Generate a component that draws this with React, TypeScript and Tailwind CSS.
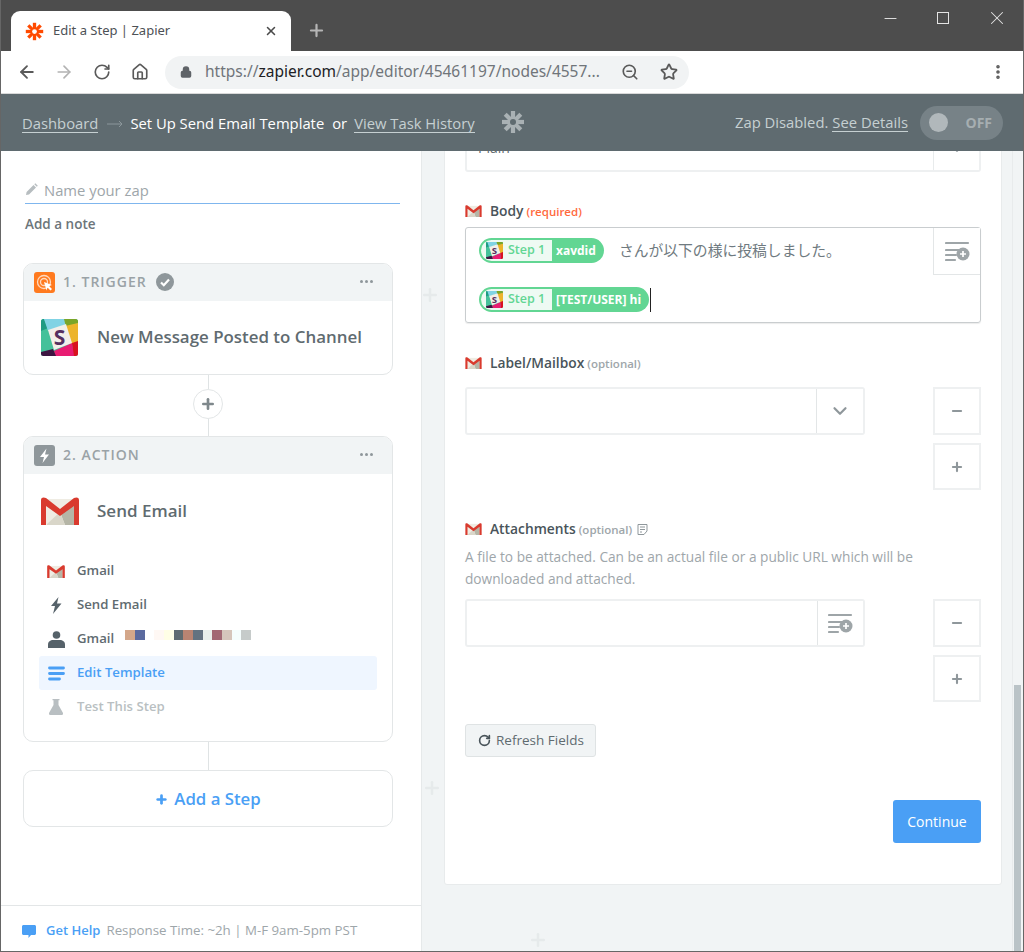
import { ArrowLeft, ArrowRight, ChevronDown, Home, Lock, Minus, MoreVertical, Plus, RotateCw, Star, X, ZoomOut } from 'lucide-react'

const redacted = [
  'bg-[#d4a78a]', 'bg-[#5b6a9f]', 'bg-white', 'bg-[#fff8f4]', 'bg-[#fffee6]', 'bg-[#5f6b70]',
  'bg-[#b98472]', 'bg-[#637280]', 'bg-[#e8efeb]', 'bg-[#a26873]', 'bg-[#d5c5bb]', 'bg-[#f5fdfd]', 'bg-[#c6cbca]',
]

function ZapierMark({ size, color, hole }: { size: number; color: string; hole: string }) {
  return (
    <svg width={size} height={size} viewBox="0 0 24 24" className="shrink-0">
      <g stroke={color} strokeWidth="4.2">
        <line x1="12" y1="1" x2="12" y2="23" />
        <line x1="1" y1="12" x2="23" y2="12" />
        <line x1="4.2" y1="4.2" x2="19.8" y2="19.8" />
        <line x1="19.8" y1="4.2" x2="4.2" y2="19.8" />
      </g>
      <circle cx="12" cy="12" r="3" fill={hole} />
    </svg>
  )
}

function GmailIcon({ w, h }: { w: number; h: number }) {
  return (
    <svg width={w} height={h} viewBox="0 0 38 28" className="shrink-0">
      <path d="M3 2h32v26H3z" fill="#efece3" />
      <path d="M19 15L33 5v23h-9z" fill="#b5b5a6" />
      <path d="M6 27l13-12 5 13H6z" fill="#d9d6c9" />
      <path d="M0 3c0-3 3-3 5-2l14 11L33 1c2-1 5-1 5 2v25h-5V9L19 19 5 9v19H0z" fill="#d93a2e" />
    </svg>
  )
}

function SlackIcon({ size, id }: { size: number; id: string }) {
  return (
    <svg width={size} height={size} viewBox="0 0 37 37" className="shrink-0">
      <clipPath id={id}>
        <rect width="37" height="37" rx="2.5" />
      </clipPath>
      <g clipPath={`url(#${id})`}>
        <rect width="37" height="37" fill="#44c19a" />
        <path d="M0 0h3l4 9-7 3z" fill="#1d9b83" />
        <path d="M3 0h22l1 5-19 7z" fill="#80d3e4" />
        <path d="M23 0h14v4L25 8z" fill="#7aa52a" />
        <path d="M24 7l13-3v19l-7 3z" fill="#ecb42c" />
        <path d="M31 24l6-2v15h-5z" fill="#d9121f" />
        <path d="M13 32l18-8 2 13H14z" fill="#e81c72" />
        <path d="M0 33l12-3 3 7H0z" fill="#3d1441" />
        <path d="M7 11l18-6 6 19-18 7z" fill="#f2efe9" />
        <text x="18.5" y="26" textAnchor="middle" fontSize="21" fontWeight="700" fill="#55305f" fontFamily="Open Sans, sans-serif">S</text>
      </g>
    </svg>
  )
}

function FieldAddIcon() {
  return (
    <svg width="25" height="21" viewBox="0 0 25 21">
      <path d="M1 2h22M1 9h13M1 14h10M1 19h9" stroke="#9ea5a8" strokeWidth="2.2" strokeLinecap="round" />
      <circle cx="18" cy="13" r="6.5" fill="#9ea5a8" />
      <path d="M18 10v6M15 13h6" stroke="white" strokeWidth="1.7" />
    </svg>
  )
}

function BoxButton({ className, children }: { className: string; children: React.ReactNode }) {
  return <div className={`flex items-center justify-center bg-white ${className}`}>{children}</div>
}

function AddRemove() {
  return (
    <div className="flex flex-col gap-2 w-12">
      <BoxButton className="h-12 border-2 border-[#eef0f1]"><Minus size={14} strokeWidth={3.6} className="text-[#8f979b]" /></BoxButton>
      <BoxButton className="h-[47px] border-2 border-[#eef0f1]"><Plus size={14} strokeWidth={3.6} className="text-[#8f979b]" /></BoxButton>
    </div>
  )
}

function FieldLabel({ name, hint, color, children }: { name: string; hint: string; color: string; children?: React.ReactNode }) {
  return (
    <div className="flex items-center h-5">
      <GmailIcon w={17} h={12} />
      <span className="ml-2 text-[13.8px] font-semibold text-[#49545a] leading-5">{name}</span>
      <span className={`ml-[3px] text-[11.5px] font-semibold leading-5 mt-px ${color}`}>{hint}</span>
      {children}
    </div>
  )
}

function Pill({ id, text }: { id: string; text: string }) {
  return (
    <span className="inline-flex items-center h-[25px] rounded-full bg-[#62d693] pl-[2px] pr-[8px] text-[12px] font-bold text-white whitespace-nowrap">
      <span className="flex items-center h-[21px] rounded-l-full bg-[#eefaf3] pl-[5px] pr-[6px] mr-[4px]">
        <SlackIcon size={17} id={id} />
        <span className="ml-[5px] text-[12.5px] text-[#62d693] font-semibold w-[38px]">Step 1</span>
      </span>
      {text}
    </span>
  )
}

function StepHeader({ icon, title, check }: { icon: React.ReactNode; title: string; check?: boolean }) {
  return (
    <div className="flex items-center h-[37px] bg-[#f1f4f5] rounded-t-[9px] pl-[10px] pr-[19px]">
      {icon}
      <span className="ml-[8px] mb-[2px] text-[14px] font-semibold tracking-[1px] text-[#9aa2a6]">{title}</span>
      {check && (
        <svg width="18" height="18" viewBox="0 0 18 18" className="ml-[9px] mb-[2px]">
          <circle cx="9" cy="9" r="9" fill="#8f979b" />
          <path d="M5 9.5l2.8 2.7L13 6.5" fill="none" stroke="white" strokeWidth="2.2" />
        </svg>
      )}
      <span className="ml-auto mb-[2px] flex gap-[2px]">
        <i className="size-[3px] rounded-full bg-[#8f979b]" />
        <i className="size-[3px] rounded-full bg-[#8f979b]" />
        <i className="size-[3px] rounded-full bg-[#8f979b]" />
      </span>
    </div>
  )
}

function MenuRow({ icon, label, className, children }: { icon: React.ReactNode; label: string; className: string; children?: React.ReactNode }) {
  return (
    <div className={`flex items-center h-[34px] rounded-[3px] text-[13.2px] font-semibold ${className}`}>
      <span className="w-[34px] mr-[4px] flex justify-center shrink-0">{icon}</span>
      {label}
      {children}
    </div>
  )
}

function BgPlus({ className }: { className: string }) {
  return <Plus size={20} strokeWidth={3} className={`absolute text-[#e6eaeb] ${className}`} />
}

export default function App() {
  return (
    <div className="w-[1024px] h-[952px] flex flex-col overflow-hidden border-x border-b border-[#666] font-['Open_Sans',sans-serif] bg-white">
      {/* window title + tabs */}
      <div className="h-[51px] bg-[#4d4d4d] flex items-end pl-[10px] shrink-0">
        <div className="w-[280px] h-10 bg-white rounded-t-[9px] flex items-center pl-[14px] pr-[13px]">
          <ZapierMark size={19} color="#ff4a00" hole="white" />
          <span className="ml-[9px] text-[13px] text-[#4d5156] font-['Noto_Sans',sans-serif]">Edit a Step | Zapier</span>
          <X size={14} strokeWidth={2.6} className="ml-auto text-[#4a4a4a]" />
        </div>
        <Plus size={19} strokeWidth={2.8} className="ml-[16px] mb-[11px] text-[#b5b5b5]" />
        <div className="ml-auto self-start flex items-center h-9 pr-[15px] text-[#e4e4e4]">
          <Minus size={19} strokeWidth={1.2} />
          <span className="size-[12px] border border-[#e4e4e4] ml-[37px]" />
          <X size={22} strokeWidth={1.1} className="ml-[37px]" />
        </div>
      </div>

      {/* browser toolbar */}
      <div className="h-[43px] bg-white border-b border-[#d9d9d9] flex items-center pl-[16px] pr-[16px] shrink-0">
        <ArrowLeft size={20} strokeWidth={2.2} className="text-[#5a5a5a]" />
        <ArrowRight size={20} strokeWidth={2} className="ml-[17px] text-[#b3b3b3]" />
        <RotateCw size={18} strokeWidth={2.2} className="ml-[19px] text-[#5a5a5a]" />
        <Home size={18} strokeWidth={2.2} className="ml-[20px] text-[#5a5a5a]" />
        <div className="ml-[16px] w-[524px] h-[33px] rounded-full bg-[#f1f3f4] flex items-center pl-[15px] pr-[11px]">
          <Lock size={12} strokeWidth={3} fill="currentColor" className="text-[#5f6368]" />
          <span className="ml-[13px] text-[15.5px] text-[#70757a] font-['Noto_Sans',sans-serif] whitespace-nowrap">
            https://<span className="text-[#202124]">zapier.com</span>/app/editor/45461197/nodes/4557...
          </span>
          <ZoomOut size={18} strokeWidth={2.2} className="ml-auto text-[#5a5a5a]" />
          <Star size={18} strokeWidth={2.4} className="ml-[21px] text-[#5a5a5a]" />
        </div>
        <MoreVertical size={18} strokeWidth={2.8} className="ml-auto text-[#5a5a5a]" />
      </div>

      {/* zap header */}
      <div className="h-[57px] bg-[#5f6b70] flex items-center pl-[21px] pr-[20px] text-[14.8px] shrink-0">
        <span className="text-[#c6d0d2] border-b border-[#c6d0d2] leading-[17px] mt-[2px]">Dashboard</span>
        <svg width="16" height="8" viewBox="0 0 16 8" className="ml-[9px] mt-[3px] shrink-0">
          <path d="M0 4h15M12 1l3 3-3 3" fill="none" stroke="#8c979b" strokeWidth="1" />
        </svg>
        <span className="ml-[7px] mt-[2px] text-white">Set Up Send Email Template</span>
        <span className="ml-2 mt-[2px] text-white">or</span>
        <span className="ml-[7px] mt-[2px] text-[#c6d0d2] border-b border-[#c6d0d2] leading-[17px]">View Task History</span>
        <span className="ml-[26px] mt-[-2px]"><ZapierMark size={24} color="#a9b1b4" hole="#5f6b70" /></span>
        <span className="ml-auto text-[#c6d0d2]">Zap Disabled.</span>
        <span className="ml-1 text-[#c6d0d2] border-b border-[#c6d0d2] leading-[17px]">See Details</span>
        <div className="ml-[12px] w-[83px] h-[34px] rounded-full bg-[#778287] flex items-center pl-[9px] pr-[11px]">
          <span className="size-[19px] rounded-full bg-[#b1b8bb]" />
          <span className="ml-auto text-[14px] font-bold text-[#a6aeb1]">OFF</span>
        </div>
      </div>

      <div className="flex flex-1 min-h-0">
        {/* left column */}
        <div className="w-[421px] shrink-0 flex flex-col border-r border-[#e6e9ea]">
          <div className="flex-1 pl-[22px] pt-[26px]">
            <div className="ml-[2px] w-[375px] h-[26px] flex items-center">
              <svg width="13" height="13" viewBox="0 0 13 13" className="shrink-0 mb-[1px]">
                <path d="M1 12l.6-3L8.5 2l2.5 2.5L4 11.5zM9.3 1.2l1-1 2.5 2.5-1 1z" fill="#b7bdc0" />
              </svg>
              <span className="ml-[6px] mt-[1px] text-[14.8px] text-[#9ea6aa]">Name your zap</span>
            </div>
            <div className="ml-[2px] w-[375px] h-px bg-[#7fb6ee]" />
            <div className="ml-[2px] mt-[10px] text-[13.5px] font-semibold text-[#6c757a] leading-[20px]">Add a note</div>

            <div className="mt-[29px] w-[370px] h-[112px] border border-[#e3e6e7] rounded-[10px] bg-white">
              <StepHeader
                check
                title="1. TRIGGER"
                icon={
                  <svg width="21" height="21" viewBox="0 0 21 21">
                    <rect width="21" height="21" rx="3" fill="#ff7a1f" />
                    <circle cx="10" cy="10" r="6.5" fill="none" stroke="#ffd9bf" strokeWidth="1.3" />
                    <circle cx="10" cy="10" r="3.5" fill="none" stroke="#ffd9bf" strokeWidth="1.3" />
                    <path d="M10 10l8 3-3 1 3 3-1.5 1.5-3-3-1 3z" fill="white" />
                  </svg>
                }
              />
              <div className="flex items-center h-[72px] pl-[17px]">
                <SlackIcon size={37} id="slack-trigger" />
                <span className="ml-[19px] text-[16.9px] font-semibold text-[#5f6b70] whitespace-nowrap">New Message Posted to Channel</span>
              </div>
            </div>

            <div className="w-[370px] h-[61px] flex flex-col items-center">
              <div className="w-px h-[14px] bg-[#dfe3e4]" />
              <div className="size-[30px] rounded-full border border-[#e3e6e7] flex items-center justify-center">
                <Plus size={16} strokeWidth={4} className="text-[#7f888c]" />
              </div>
              <div className="w-px flex-1 bg-[#dfe3e4]" />
            </div>

            <div className="w-[370px] h-[306px] border border-[#e3e6e7] rounded-[10px] bg-white">
              <StepHeader
                title="2. ACTION"
                icon={
                  <svg width="21" height="21" viewBox="0 0 21 21">
                    <rect width="21" height="21" rx="3" fill="#8f979b" />
                    <path d="M12.5 3.5L6 12h4l-1.5 6L15 9.5h-4z" fill="white" />
                  </svg>
                }
              />
              <div className="flex items-center h-[74px] pl-[17px]">
                <GmailIcon w={38} h={28} />
                <span className="ml-[18px] text-[17px] font-semibold text-[#5f6b70]">Send Email</span>
              </div>
              <div className="mx-[15px] mt-[6px] text-[#5f6b70]">
                <MenuRow label="Gmail" className="" icon={<GmailIcon w={18} h={13} />} />
                <MenuRow
                  label="Send Email"
                  className=""
                  icon={
                    <svg width="12" height="17" viewBox="0 0 12 17">
                      <path d="M8.5 0L1 9h4l-2 8L11.5 6.5H7z" fill="#56626a" />
                    </svg>
                  }
                />
                <MenuRow
                  label="Gmail"
                  className=""
                  icon={
                    <svg width="17" height="17" viewBox="0 0 17 17">
                      <circle cx="8.5" cy="4" r="3.8" fill="#56626a" />
                      <path d="M0 17v-3.5C0 10.5 2.5 9 5 9h7c2.5 0 5 1.5 5 4.5V17z" fill="#56626a" />
                    </svg>
                  }
                >
                  <span className="ml-[11px] mb-[9px] flex h-[10px]">
                    {redacted.map((c, i) => (
                      <i key={i} className={`w-[9.7px] h-[10px] ${c}`} />
                    ))}
                  </span>
                </MenuRow>
                <MenuRow
                  label="Edit Template"
                  className="bg-[#eff6ff] text-[#4a9ff5]"
                  icon={
                    <svg width="17" height="15" viewBox="0 0 17 15">
                      <path d="M1.5 2h14M1.5 7.5h14M1.5 13h10" stroke="#4a9ff5" strokeWidth="2.8" strokeLinecap="round" />
                    </svg>
                  }
                />
                <MenuRow
                  label="Test This Step"
                  className="text-[#b9bfc2]"
                  icon={
                    <svg width="14" height="16" viewBox="0 0 14 16">
                      <path d="M3.5 0h7v1.2H9.5V6L14 14c.4 1-.2 2-1.3 2H1.3C.2 16-.4 15 0 14l4.5-8V1.2h-1z" fill="#b9bfc2" />
                    </svg>
                  }
                />
              </div>
            </div>

            <div className="w-[370px] flex justify-center">
              <div className="w-px h-[28px] bg-[#dfe3e4]" />
            </div>
            <div className="w-[370px] h-[57px] pt-[1px] border border-[#e3e6e7] rounded-[10px] flex items-center justify-center text-[#4a9ff5] text-[16.8px] font-semibold">
              <Plus size={13} strokeWidth={5} className="mr-[6px]" />
              Add a Step
            </div>
          </div>
          <div className="h-[46px] border-t border-[#e3e6e7] flex items-center pl-[21px] pt-[5px] shrink-0">
            <svg width="14" height="13" viewBox="0 0 14 13">
              <path d="M1.5 0h11C13.3 0 14 .7 14 1.5v7c0 .8-.7 1.5-1.5 1.5H9l-2.5 3V10h-5C.7 10 0 9.3 0 8.5v-7C0 .7.7 0 1.5 0z" fill="#4a9ff5" />
            </svg>
            <span className="ml-[10px] text-[13px] font-semibold text-[#4a9ff5]">Get Help</span>
            <span className="ml-[6px] text-[13.3px] text-[#9ea6aa] whitespace-nowrap">Response Time: ~2h | M-F 9am-5pm PST</span>
          </div>
        </div>

        {/* right column */}
        <div className="flex-1 relative bg-[#f1f4f5] overflow-hidden flex">
          <BgPlus className="left-[-2px] top-[134px]" />
          <BgPlus className="left-[0px] top-[627px]" />
          <BgPlus className="left-[106px] top-[779px]" />
          <div className="flex-1 pl-[22px] pr-[10px]">
            <div className="-mt-[28px] h-[762px] bg-white border border-[#e8ebec] rounded-[3px] pl-[20px] pr-[20px]">
              <div className="flex h-[48px] border-2 border-[#eef0f1] rounded-[3px]">
                <span className="flex-1 pl-[11px] pt-[11px] text-[14px] text-[#5f6b70]">Plain</span>
                <BoxButton className="w-[46px] border-l border-[#e8ebec]"><ChevronDown size={22} strokeWidth={2.4} className="text-[#8f979b]" /></BoxButton>
              </div>

              <div className="mt-[29px]">
                <FieldLabel name="Body" hint="(required)" color="text-[#ff6a3d]" />
              </div>
              <div className="mt-[6px] h-[96px] border border-[#c9cdcf] rounded-[3px] flex shadow-[0_1px_1px_rgba(0,0,0,0.08)]">
                <div className="flex-1 pl-[13px] pt-[10px]">
                  <div className="flex items-center h-[25px]">
                    <Pill id="slack-a" text="xavdid" />
                    <span className="ml-[15px] text-[14.8px] text-[#6f7a80] font-['Open_Sans','Noto_Sans_CJK_JP',sans-serif] whitespace-nowrap">さんが以下の様に投稿しました。</span>
                  </div>
                  <div className="flex items-center h-[25px] mt-[24px]">
                    <Pill id="slack-b" text="[TEST/USER] hi" />
                    <span className="w-px h-[24px] bg-[#222] ml-[1px]" />
                  </div>
                </div>
                <BoxButton className="w-[47px] h-[47px] border-l border-b border-[#e3e6e7]"><FieldAddIcon /></BoxButton>
              </div>

              <div className="mt-[30px]">
                <FieldLabel name="Label/Mailbox" hint="(optional)" color="text-[#9ea6aa]" />
              </div>
              <div className="mt-[14px] flex justify-between">
                <div className="flex w-[400px] h-12 border-2 border-[#eef0f1] rounded-[3px]">
                  <div className="flex-1" />
                  <BoxButton className="w-[47px] border-l border-[#e3e6e7]"><ChevronDown size={22} strokeWidth={2.4} className="text-[#8f979b]" /></BoxButton>
                </div>
                <AddRemove />
              </div>

              <div className="mt-[29px]">
                <FieldLabel name="Attachments" hint="(optional)" color="text-[#9ea6aa]">
                  <svg width="11" height="11" viewBox="0 0 11 11" className="ml-[5px] mt-px">
                    <path d="M1 .5h9v6.5L7 10.5H1zM3 3h5M3 5.5h5M3 8h2" fill="none" stroke="#8f979b" strokeWidth="1" />
                  </svg>
                </FieldLabel>
              </div>
              <div className="mt-[7px] w-[460px] text-[13.7px] leading-[22px] text-[#9ea6aa]">
                A file to be attached. Can be an actual file or a public URL which will be downloaded and attached.
              </div>
              <div className="mt-[9px] flex justify-between">
                <div className="flex w-[400px] h-12 border-2 border-[#eef0f1] rounded-[3px]">
                  <div className="flex-1" />
                  <BoxButton className="w-[46px] border-l border-[#e3e6e7]"><FieldAddIcon /></BoxButton>
                </div>
                <AddRemove />
              </div>

              <div className="mt-[22px] inline-flex items-center h-[33px] pl-[12px] pr-[11px] bg-[#f1f4f5] border border-[#dfe3e4] rounded-[3px] text-[13.5px] text-[#5f6b70]">
                <RotateCw size={13} strokeWidth={3} className="mr-[5px] text-[#49545a]" />
                Refresh Fields
              </div>

              <div className="mt-[43px] flex justify-end">
                <div className="w-[88px] h-[43px] rounded-[3px] bg-[#4a9ff5] flex items-center justify-center text-[14px] text-white">Continue</div>
              </div>
            </div>
          </div>
          <div className="w-[11px] shrink-0 bg-[#f1f4f5] border-l border-[#e8ebec] flex flex-col justify-end">
            <div className="h-[266px] ml-[1px] mr-[2px] bg-[#bac3c7]" />
          </div>
        </div>
      </div>
    </div>
  )
}
